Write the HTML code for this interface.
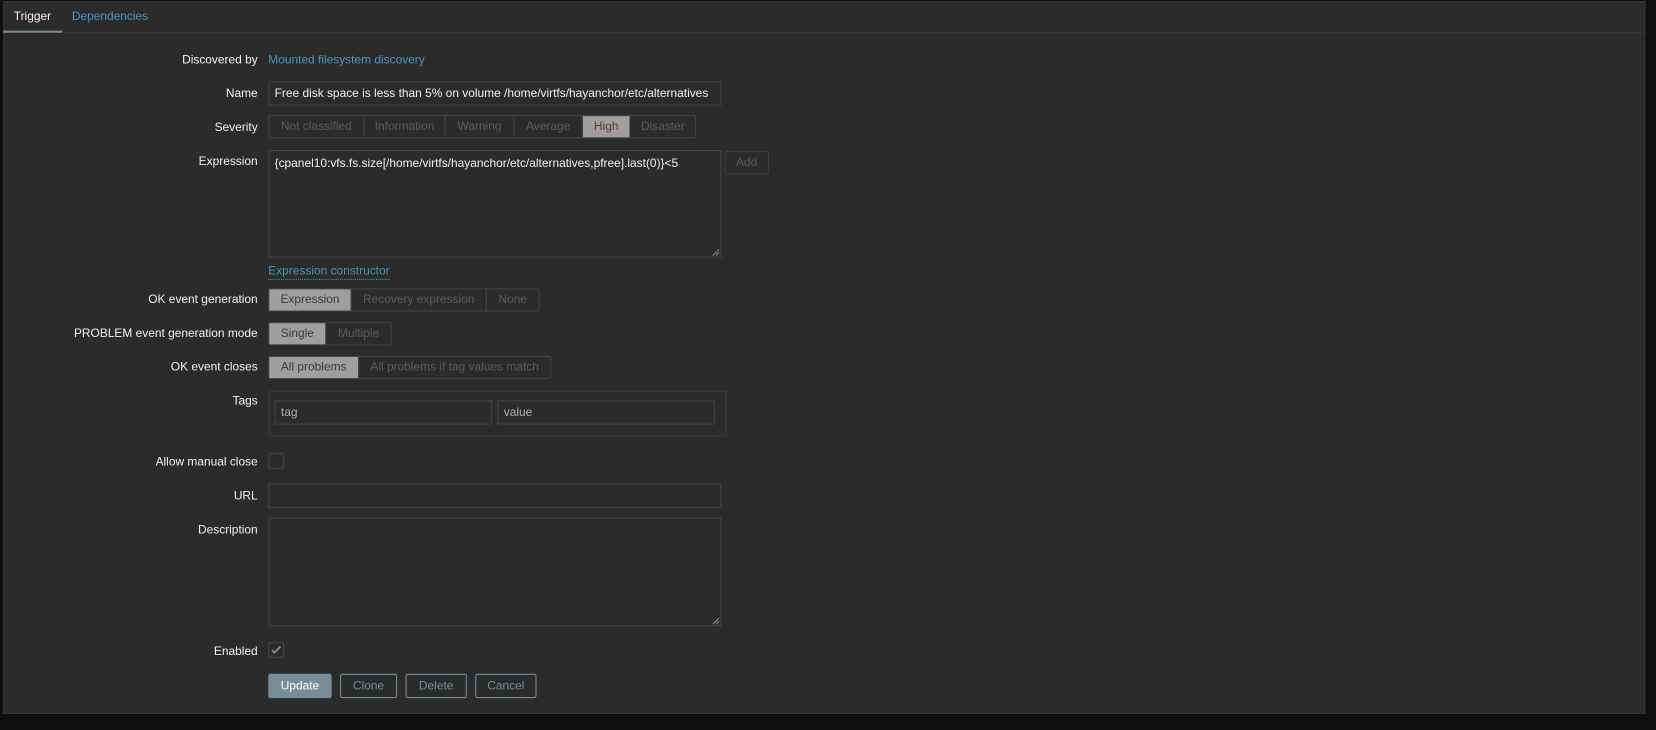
<!DOCTYPE html>
<html><head><style>
*{box-sizing:border-box;margin:0;padding:0}
body{width:1656px;height:730px;background:#0e0f11;font-family:"Liberation Sans",Arial,sans-serif;font-size:11.3px;color:#f2f2f2;position:relative;overflow:hidden}
#w{position:absolute;left:0;top:0;width:1568px;height:691px;transform:scale(1.05612);transform-origin:0 0}
.panel{position:absolute;left:3px;top:1px;width:1555px;height:675px;background:#2b2b2b;border:1px solid #383838}
.a{position:absolute}
.lbl{position:absolute;right:1324px;text-align:right;white-space:nowrap;color:#f2f2f2;margin-top:1px}
.inp{position:absolute;border:1px solid #434343;background:#2b2b2b;color:#f2f2f2;padding:1px 5px 0;line-height:20px;white-space:nowrap;overflow:hidden}
.seg{position:absolute;display:flex;border:1px solid #434343;border-radius:2px;height:22px}
.seg div{border-left:1px solid #434343;color:#5b5b5b;line-height:21px;text-align:center}
.seg div:first-child{border-left:none}
.seg .on{background:#9f9f9f;color:#3a3a3a}
.btn{position:absolute;height:23px;border:1px solid #768d99;color:#768d99;border-radius:2px;text-align:center;line-height:22px}
.cb{position:absolute;width:15px;height:15px;border:1px solid #434343;border-radius:2px}
a{color:#4796c4;text-decoration:none}
</style></head><body><div id="w">
<div class="panel"></div>
<div class="a" style="left:4px;top:30px;width:1553px;height:1px;background:#3a3a3a"></div>
<div class="a" style="left:13px;top:10px;color:#f2f2f2">Trigger</div>
<div class="a" style="left:3px;top:29px;width:56px;height:2px;background:#768d99"></div>
<div class="a" style="left:68px;top:10px;color:#4796c4">Dependencies</div>

<div class="lbl" style="top:50px">Discovered by</div>
<a class="a" style="left:254px;top:51px">Mounted filesystem discovery</a>

<div class="lbl" style="top:82px">Name</div>
<div class="inp" style="left:254px;top:77px;width:429px;height:23px">Free disk space is less than 5% on volume /home/virtfs/hayanchor/etc/alternatives</div>

<div class="lbl" style="top:114px">Severity</div>
<div class="seg" style="left:254px;top:109px">
<div style="width:89px">Not classified</div><div style="width:77px">Information</div><div style="width:65px">Warning</div><div style="width:65px">Average</div><div class="on" style="width:45px;color:#6b3a1a">High</div><div style="width:62px">Disaster</div></div>

<div class="lbl" style="top:146px">Expression</div>
<div class="inp" style="left:254px;top:142px;width:429px;height:102px;line-height:22px">{cpanel10:vfs.fs.size[/home/virtfs/hayanchor/etc/alternatives,pfree].last(0)}&lt;5</div>
<svg class="a" style="left:674px;top:235px" width="8" height="8"><path d="M1 7L7 1M4 7L7 4" stroke="#888" stroke-width="1"/></svg>
<div class="a" style="left:686px;top:143px;width:42px;height:22px;border:1px solid #3e3e3e;border-radius:2px;color:#5b5b5b;text-align:center;line-height:21px">Add</div>
<a class="a" style="left:254px;top:250px;border-bottom:1px dotted #4796c4;line-height:14px">Expression constructor</a>

<div class="lbl" style="top:277px">OK event generation</div>
<div class="seg" style="left:254px;top:273px"><div class="on" style="width:77px">Expression</div><div style="width:128px">Recovery expression</div><div style="width:50px">None</div></div>

<div class="lbl" style="top:309px">PROBLEM event generation mode</div>
<div class="seg" style="left:254px;top:305px"><div class="on" style="width:53px">Single</div><div style="width:62px">Multiple</div></div>

<div class="lbl" style="top:341px">OK event closes</div>
<div class="seg" style="left:254px;top:337px"><div class="on" style="width:84px">All problems</div><div style="width:182px">All problems if tag values match</div></div>

<div class="lbl" style="top:373px">Tags</div>
<div class="a" style="left:254px;top:370px;width:434px;height:43px;border:1px solid #3a3a3a"></div>
<div class="inp" style="left:260px;top:379px;width:206px;height:23px;color:#b0b0b0">tag</div>
<div class="inp" style="left:471px;top:379px;width:206px;height:23px;color:#b0b0b0">value</div>

<div class="lbl" style="top:431px">Allow manual close</div>
<div class="cb" style="left:254px;top:429px"></div>

<div class="lbl" style="top:463px">URL</div>
<div class="inp" style="left:254px;top:458px;width:429px;height:23px"></div>

<div class="lbl" style="top:495px">Description</div>
<div class="inp" style="left:254px;top:490px;width:429px;height:103px"></div>
<svg class="a" style="left:674px;top:584px" width="8" height="8"><path d="M1 7L7 1M4 7L7 4" stroke="#888" stroke-width="1"/></svg>

<div class="lbl" style="top:610px">Enabled</div>
<div class="cb" style="left:254px;top:608px"><svg width="13" height="13" style="position:absolute;left:0;top:0"><path d="M2.5 6.5L5 9L10.5 3" stroke="#7a8c99" stroke-width="1.8" fill="none"/></svg></div>

<div class="btn" style="left:254px;top:638px;width:60px;background:#768d99;color:#fff">Update</div>
<div class="btn" style="left:322px;top:638px;width:54px">Clone</div>
<div class="btn" style="left:384px;top:638px;width:58px">Delete</div>
<div class="btn" style="left:450px;top:638px;width:58px">Cancel</div>
</div></body></html>
